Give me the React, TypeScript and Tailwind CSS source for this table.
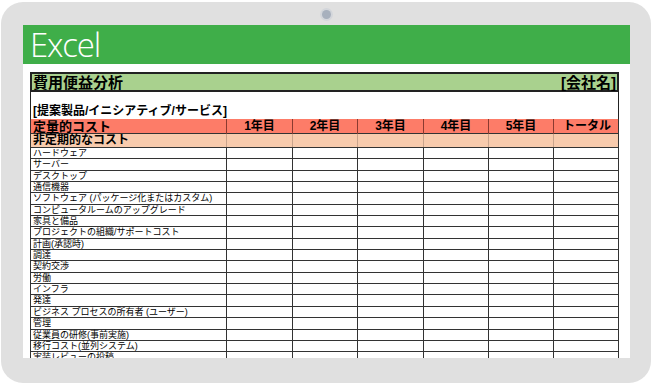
const cols = "grid grid-cols-[196px_66px_65px_66px_65px_65px_66px]";

const years = ["1年目", "2年目", "3年目", "4年目", "5年目", "トータル"];

const rows = [
  "ハードウェア",
  "サーバー",
  "デスクトップ",
  "通信機器",
  "ソフトウェア (パッケージ化またはカスタム)",
  "コンピュータルームのアップグレード",
  "家具と備品",
  "プロジェクトの組織/サポートコスト",
  "計画(承認時)",
  "調達",
  "契約交渉",
  "労働",
  "インフラ",
  "発達",
  "ビジネス プロセスの所有者 (ユーザー)",
  "管理",
  "従業員の研修(事前実施)",
  "移行コスト(並列システム)",
  "実装レビューの投稿",
];

const font = { fontFamily: '"Liberation Sans", "Noto Sans CJK JP", sans-serif' };

export default function App() {
  return (
    <div className="w-[654px] h-[385px] bg-white overflow-hidden">
      <div className="relative ml-[1px] mt-[2px] w-[650px] h-[381px] rounded-[22px] bg-[#e0e0e0] pt-[23px] pl-[22px]">
        <div className="absolute left-[321px] top-[8px] w-[9px] h-[9px] rounded-full bg-[#a7b0bd] ring-2 ring-[#d3d6db]" />
        <div className="w-[607px] h-[333px] bg-white overflow-hidden">
          <div className="h-[39px] bg-[#3fae49] pl-[7px] flex items-center">
            <span
              className="text-white text-[33px] font-light tracking-[-1.2px] leading-[39px]"
              style={{ fontFamily: '"Open Sans", sans-serif' }}
            >
              Excel
            </span>
          </div>

          <div className="pl-[7px] pt-[8px] text-black" style={font}>
            <div className="w-[589px]">
              <div className="h-[20px] border-2 border-[#222] bg-[#a9d18e] flex items-center justify-between pl-[1px] pr-[1px]">
                <span className="text-[15px] font-bold leading-none">費用便益分析</span>
                <span className="text-[15px] font-bold leading-none">[会社名]</span>
              </div>
              <div className="h-[27px] border-x border-[#222] flex items-end pl-[2px] pb-[1px]">
                <span className="text-[12px] font-bold leading-[14px]">[提案製品/イニシアティブ/サービス]</span>
              </div>

              <div className={`${cols} h-[15px] bg-[#fd7c68] border-x border-b border-[#333]`}>
                <div className="pl-[2px] text-[13px] font-bold leading-[15px] border-r border-[#8a3a30]">定量的コスト</div>
                {years.map((y, i) => (
                  <div
                    key={y}
                    className={`text-center text-[12px] font-bold leading-[15px] ${i < 5 ? "border-r border-[#8a3a30]" : ""}`}
                  >
                    {y}
                  </div>
                ))}
              </div>

              <div className={`${cols} h-[14px] bg-[#f8cbad] border-x border-b border-[#333]`}>
                <div className="pl-[2px] text-[12px] font-bold leading-[13px] border-r border-[#c9a48c]">非定期的なコスト</div>
                {years.map((y, i) => (
                  <div key={y} className={i < 5 ? "border-r border-[#c9a48c]" : ""} />
                ))}
              </div>

              {rows.map((r) => (
                <div key={r} className={`${cols} h-[11.35px] border-x border-b border-[#333]`}>
                  <div className="pl-[2px] text-[9px] leading-[10.5px] whitespace-nowrap border-r border-[#333]">{r}</div>
                  {years.map((y, i) => (
                    <div key={y} className={i < 5 ? "border-r border-[#333]" : ""} />
                  ))}
                </div>
              ))}
            </div>
          </div>
        </div>
      </div>
    </div>
  );
}
